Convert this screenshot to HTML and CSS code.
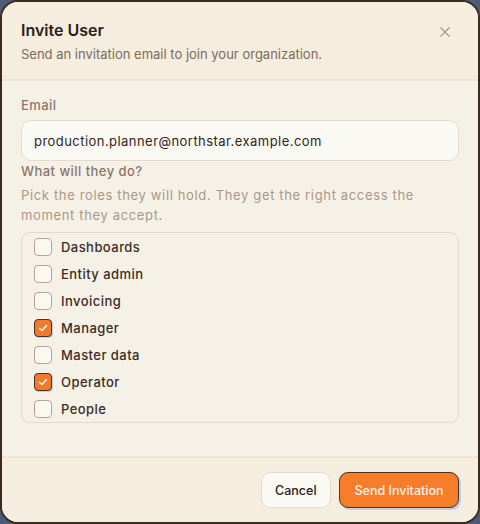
FILE: index.html
```html
<!DOCTYPE html>
<html>
<head>
<meta charset="utf-8">
<link rel="stylesheet" href="styles.css">
</head>
<body>
<div class="dialog">
  <div class="header">
    <div class="titles">
      <h1 class="title">Invite User</h1>
      <p class="subtitle">Send an invitation email to join your organization.</p>
    </div>
    <button class="close" aria-label="Close">
      <svg width="10" height="10" viewBox="0 0 10 10"><path d="M0.5 0.5L9.5 9.5M9.5 0.5L0.5 9.5" stroke="#a59a92" stroke-width="1.3" fill="none"/></svg>
    </button>
  </div>
  <div class="body">
    <label class="label">Email</label>
    <div class="input">production.planner@northstar.example.com</div>
    <div class="label q">What will they do?</div>
    <p class="desc">Pick the roles they will hold. They get the right access the moment they accept.</p>
    <div class="roles">
      <div class="role"><span class="cb"></span><span>Dashboards</span></div>
      <div class="role"><span class="cb"></span><span>Entity admin</span></div>
      <div class="role"><span class="cb"></span><span>Invoicing</span></div>
      <div class="role"><span class="cb on"><svg width="12" height="12" viewBox="0 0 12 12"><path d="M2.5 6.2L5 8.5L9.5 3.5" stroke="#fff" stroke-width="1.3" fill="none" stroke-linecap="round" stroke-linejoin="round"/></svg></span><span>Manager</span></div>
      <div class="role"><span class="cb"></span><span>Master data</span></div>
      <div class="role"><span class="cb on"><svg width="12" height="12" viewBox="0 0 12 12"><path d="M2.5 6.2L5 8.5L9.5 3.5" stroke="#fff" stroke-width="1.3" fill="none" stroke-linecap="round" stroke-linejoin="round"/></svg></span><span>Operator</span></div>
      <div class="role"><span class="cb"></span><span>People</span></div>
    </div>
  </div>
  <div class="footer">
    <button class="btn cancel">Cancel</button>
    <button class="btn primary">Send Invitation</button>
  </div>
</div>
</body>
</html>
```
FILE: styles.css
```css
html, body {
  margin: 0;
  padding: 0;
  height: 100%;
  background: #4d5b78;
}
body {
  font-family: Inter, "Noto Sans", sans-serif;
  letter-spacing: 0.45px;
}
.dialog {
  box-sizing: border-box;
  width: 480px;
  height: 524px;
  background: #f6f1e6;
  border: 2px solid #3b2a22;
  border-radius: 18px;
  overflow: hidden;
  display: flex;
  flex-direction: column;
}
.header {
  background: #f5eddd;
  border-bottom: 2px solid #ede4d4;
  padding: 18px 19px 15px 19px;
  display: flex;
  justify-content: space-between;
  align-items: flex-start;
}
.title {
  margin: 0;
  font-size: 16px;
  font-weight: 600;
  color: #2b201b;
  line-height: 20px;
  letter-spacing: 0;
}
.subtitle {
  margin: 4px 0 0;
  font-size: 13px;
  letter-spacing: 0;
  color: #7b6b61;
  line-height: 20px;
}
.close {
  border: 0;
  background: transparent;
  padding: 0;
  margin: 7px 9px 0 0;
  width: 10px;
  height: 10px;
  display: flex;
}
.body {
  flex: 1;
  padding: 14px 19px 0 19px;
  display: flex;
  flex-direction: column;
}
.label {
  font-size: 13px;
  color: #8c766b;
  line-height: 20px;
  font-weight: 500;
}
.input {
  margin-top: 5px;
  height: 41px;
  box-sizing: border-box;
  border: 1px solid #e3dbcd;
  border-radius: 10px;
  background: #fbf9f3;
  padding: 0 12px;
  display: flex;
  align-items: center;
  font-size: 13px;
  color: #30251f;
}
.q {
  margin-top: 0;
}
.desc {
  margin: 4px 0 0;
  font-size: 13px;
  line-height: 20px;
  letter-spacing: 0.65px;
  color: #a9978b;
}
.roles {
  margin-top: 7px;
  border: 1px solid #e2d9ca;
  border-radius: 9px;
  padding: 0 12px;
  display: flex;
  flex-direction: column;
}
.role {
  height: 27px;
  display: flex;
  align-items: center;
  gap: 9px;
  font-size: 13px;
  font-weight: 500;
  color: #3a2c24;
}
.cb {
  box-sizing: border-box;
  width: 18px;
  height: 18px;
  border: 1px solid #b8a195;
  border-radius: 4px;
  background: #fbf8f2;
  display: flex;
  align-items: center;
  justify-content: center;
}
.cb.on {
  background: #f47a2b;
  border-color: #4a3326;
  box-shadow: 1px 1px 0 #bcd0ea;
}
.footer {
  background: #f5eddd;
  border-top: 2px solid #ede4d4;
  padding: 14px 19px 14px;
  display: flex;
  justify-content: flex-end;
  gap: 8px;
}
.btn {
  height: 36px;
  border-radius: 9px;
  font-family: inherit;
  font-size: 12.5px;
  font-weight: 500;
  letter-spacing: 0;
}
.cancel {
  background: #fbf9f3;
  border: 1px solid #e3dbcd;
  color: #2b201b;
  padding: 0 13.5px;
}
.primary {
  background: #f67e2b;
  border: 1px solid #4a3326;
  color: #fff3e6;
  padding: 0 14.5px;
  box-shadow: 2px 2px 0 #bfd0e6;
}
```
